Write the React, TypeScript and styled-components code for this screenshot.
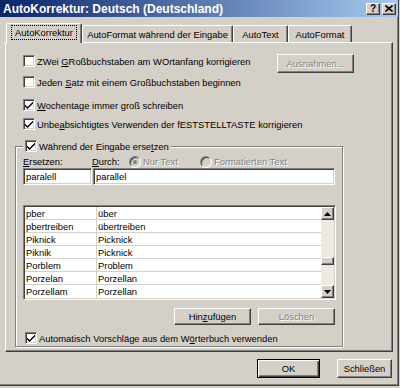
import React from "react";
import styled, { createGlobalStyle, css } from "styled-components";

const GlobalStyle = createGlobalStyle`
  html, body {
    margin: 0;
    padding: 0;
    background: #d4d0c8;
  }
  body {
    font-family: "Liberation Sans", Arial, sans-serif;
    font-size: 9.4px;
    color: #000;
  }
`;

const raised = css`
  border: 1px solid;
  border-color: #ffffff #404040 #404040 #ffffff;
  box-shadow: inset -1px -1px #808080;
`;

const sunken = css`
  border: 1px solid;
  border-color: #808080 #ffffff #ffffff #808080;
  box-shadow: inset 1px 1px #404040, inset -1px -1px #d4d0c8;
`;

const disabledText = css`
  color: #808080;
  text-shadow: 1px 1px #ffffff;
`;

function App() {
  const entries = [
    ["pber", "über"],
    ["pbertreiben", "übertreiben"],
    ["Piknick", "Picknick"],
    ["Piknik", "Picknick"],
    ["Porblem", "Problem"],
    ["Porzelan", "Porzellan"],
    ["Porzellam", "Porzellan"],
  ];

  return (
    <>
      <GlobalStyle />
      <Window>
        <TitleBar>
          <Title>AutoKorrektur: Deutsch (Deutschland)</Title>
          <CaptionButton>?</CaptionButton>
          <CaptionButton>
            <svg width="8" height="7" viewBox="0 0 8 7">
              <path d="M0.5 0.5 L7.5 6.5 M7.5 0.5 L0.5 6.5" stroke="#000" strokeWidth="1.6" />
            </svg>
          </CaptionButton>
        </TitleBar>

        <TabRow>
          <Tab $active $w={76}>
            <FocusLabel>AutoKorrektur</FocusLabel>
          </Tab>
          <Tab $w={151}>AutoFormat während der Eingabe</Tab>
          <Tab $w={55}>AutoText</Tab>
          <Tab $w={64}>AutoFormat</Tab>
        </TabRow>

        <Panel>
          <CheckRow $mt={12}>
            <Check />
            <span>
              ZWei <u>G</u>Roßbuchstaben am WOrtanfang korrigieren
            </span>
            <PushButton $w={77} $h={19} $disabled $side>
              Ausnahmen...
            </PushButton>
          </CheckRow>
          <CheckRow $mt={9}>
            <Check />
            <span>
              Jeden <u>S</u>atz mit einem Großbuchstaben beginnen
            </span>
          </CheckRow>
          <CheckRow $mt={11}>
            <Check $checked />
            <span>
              <u>W</u>ochentage immer groß schreiben
            </span>
          </CheckRow>
          <CheckRow $mt={7}>
            <Check $checked />
            <span>
              Unbe<u>a</u>bsichtigtes Verwenden der fESTSTELLTASTE korrigieren
            </span>
          </CheckRow>

          <Group>
            <Legend>
              <Check $checked />
              <span>
                Während der Eingabe erse<u>t</u>zen
              </span>
            </Legend>

            <LabelRow>
              <FieldLabel $w={69}>
                <u>E</u>rsetzen:
              </FieldLabel>
              <FieldLabel $w={37}>
                <u>D</u>urch:
              </FieldLabel>
              <RadioItem $w={71}>
                <Radio $on />
                <span>Nur Text</span>
              </RadioItem>
              <RadioItem>
                <Radio />
                <span>Formatierten Text</span>
              </RadioItem>
            </LabelRow>

            <InputRow>
              <TextBox $w={69}>paralell</TextBox>
              <TextBox $w={242}>parallel</TextBox>
            </InputRow>

            <ListBox>
              <Rows>
                {entries.map(([from, to], i) => (
                  <ListRow key={i} $last={i === entries.length - 1}>
                    <Cell $first>{from}</Cell>
                    <Cell>{to}</Cell>
                  </ListRow>
                ))}
              </Rows>
              <ScrollBar>
                <ScrollButton>
                  <svg width="7" height="4" viewBox="0 0 7 4">
                    <polygon points="3.5,0 7,4 0,4" fill="#000" />
                  </svg>
                </ScrollButton>
                <Track $offset={37}>
                  <Thumb />
                </Track>
                <ScrollButton>
                  <svg width="7" height="4" viewBox="0 0 7 4">
                    <polygon points="0,0 7,0 3.5,4" fill="#000" />
                  </svg>
                </ScrollButton>
              </ScrollBar>
            </ListBox>

            <ButtonRow>
              <PushButton $w={77} $h={17}>
                Hin<u>z</u>ufügen
              </PushButton>
              <PushButton $w={77} $h={17} $disabled>
                Löschen
              </PushButton>
            </ButtonRow>

            <AutoRow>
              <Check $checked />
              <span>
                Automatisch Vorschläge aus dem W<u>ö</u>rterbuch verwenden
              </span>
            </AutoRow>
          </Group>
        </Panel>

        <Footer>
          <PushButton $w={63} $h={19} $default>
            OK
          </PushButton>
          <PushButton $w={55} $h={19}>
            Schließen
          </PushButton>
        </Footer>
      </Window>
    </>
  );
}

function Check({ $checked }: { $checked?: boolean }) {
  return (
    <CheckBox>
      {$checked && (
        <svg width="8" height="7" viewBox="0 0 8 7">
          <path d="M0 2.5 L0 4.5 L2.5 7 L8 1.5 L8 -0.5 L2.5 5 Z" fill="#000" />
        </svg>
      )}
    </CheckBox>
  );
}

export default App;

const Window = styled.div`
  width: 399px;
  height: 386px;
  box-sizing: border-box;
  background: #d4d0c8;
  border-right: 1px solid #404040;
  border-bottom: 1px solid #404040;
  box-shadow: inset -1px -1px #808080;
  display: flex;
  flex-direction: column;
`;

const TitleBar = styled.div`
  height: 17px;
  display: flex;
  align-items: center;
  gap: 2px;
  padding: 0 2px 0 3px;
  background: linear-gradient(to right, #0a246a, #a6caf0);
`;

const Title = styled.div`
  flex: 1;
  color: #ffffff;
  font-weight: bold;
  font-size: 12px;
  white-space: nowrap;
`;

const CaptionButton = styled.div`
  width: 14px;
  height: 12px;
  box-sizing: border-box;
  background: #d4d0c8;
  ${raised}
  display: flex;
  align-items: center;
  justify-content: center;
  font-weight: bold;
  font-size: 10px;
  line-height: 1;
`;

const TabRow = styled.div`
  display: flex;
  align-items: flex-start;
  height: 19px;
  margin: 6px 0 0 6px;
  position: relative;
  z-index: 1;
`;

const Tab = styled.div<{ $active?: boolean; $w: number }>`
  width: ${(p) => p.$w}px;
  height: ${(p) => (p.$active ? 20 : 17)}px;
  margin-top: ${(p) => (p.$active ? 0 : 2)}px;
  box-sizing: border-box;
  border: 1px solid;
  border-bottom: none;
  border-color: #ffffff #404040 transparent #ffffff;
  border-radius: 2px 2px 0 0;
  box-shadow: inset -1px 0 #808080;
  background: #d4d0c8;
  display: flex;
  align-items: center;
  justify-content: center;
  padding-bottom: ${(p) => (p.$active ? 2 : 0)}px;
  white-space: nowrap;
`;

const FocusLabel = styled.span`
  outline: 1px dotted #000;
  padding: 1px 3px;
`;

const Panel = styled.div`
  margin-left: 5px;
  width: 388px;
  height: 310px;
  box-sizing: border-box;
  border: 1px solid;
  border-color: #ffffff #404040 #404040 #ffffff;
  box-shadow: inset -1px -1px #808080;
  padding-left: 9px;
  display: flex;
  flex-direction: column;
`;

const CheckRow = styled.div<{ $mt: number }>`
  display: flex;
  align-items: center;
  gap: 2px;
  height: 12px;
  margin-top: ${(p) => p.$mt}px;
  padding-left: 8px;
  white-space: nowrap;
`;

const CheckBox = styled.span`
  width: 12px;
  height: 12px;
  flex-shrink: 0;
  box-sizing: border-box;
  background: #ffffff;
  ${sunken}
  display: flex;
  align-items: center;
  justify-content: center;
`;

const PushButton = styled.div<{
  $w: number;
  $h: number;
  $disabled?: boolean;
  $default?: boolean;
  $side?: boolean;
}>`
  width: ${(p) => p.$w}px;
  height: ${(p) => p.$h}px;
  box-sizing: border-box;
  background: #d4d0c8;
  display: flex;
  align-items: center;
  justify-content: center;
  white-space: nowrap;
  ${(p) =>
    p.$default
      ? css`
          border: 1px solid #000;
          box-shadow: inset 1px 1px #ffffff, inset -1px -1px #404040, inset -2px -2px #808080;
        `
      : raised}
  ${(p) => p.$disabled && disabledText}
  ${(p) =>
    p.$side &&
    css`
      align-self: flex-start;
      margin: -1px 38px 0 auto;
    `}
`;

const Group = styled.div`
  margin-top: 16px;
  width: 328px;
  height: 201px;
  box-sizing: border-box;
  border: 1px solid #808080;
  box-shadow: inset 1px 1px #ffffff, 1px 1px #ffffff;
  padding: 0 7px;
  display: flex;
  flex-direction: column;
`;

const Legend = styled.div`
  align-self: flex-start;
  display: flex;
  align-items: center;
  gap: 2px;
  height: 12px;
  margin-top: -7px;
  padding: 0 2px;
  background: #d4d0c8;
  white-space: nowrap;
`;

const LabelRow = styled.div`
  display: flex;
  align-items: center;
  height: 11px;
  margin-top: 4px;
  white-space: nowrap;
`;

const FieldLabel = styled.div<{ $w: number }>`
  width: ${(p) => p.$w}px;
`;

const RadioItem = styled.div<{ $w?: number }>`
  width: ${(p) => (p.$w ? `${p.$w}px` : "auto")};
  display: flex;
  align-items: center;
  gap: 2px;
  ${disabledText}
`;

const Radio = styled.span<{ $on?: boolean }>`
  width: 12px;
  height: 12px;
  box-sizing: border-box;
  border-radius: 50%;
  border: 1px solid;
  border-color: #808080 #ffffff #ffffff #808080;
  box-shadow: inset 1px 1px #404040;
  background: #d4d0c8;
  display: flex;
  align-items: center;
  justify-content: center;
  text-shadow: none;
  &::after {
    content: "";
    width: 4px;
    height: 4px;
    border-radius: 50%;
    background: ${(p) => (p.$on ? "#808080" : "transparent")};
  }
`;

const InputRow = styled.div`
  display: flex;
  gap: 1px;
  margin-top: 1px;
`;

const TextBox = styled.div<{ $w: number }>`
  width: ${(p) => p.$w}px;
  height: 17px;
  box-sizing: border-box;
  background: #ffffff;
  ${sunken}
  padding-left: 2px;
  display: flex;
  align-items: center;
`;

const ListBox = styled.div`
  width: 313px;
  height: 95px;
  margin-top: 20px;
  box-sizing: border-box;
  background: #ffffff;
  ${sunken}
  padding: 1px;
  display: flex;
`;

const Rows = styled.div`
  flex: 1;
  display: flex;
  flex-direction: column;
`;

const ListRow = styled.div<{ $last?: boolean }>`
  height: 13px;
  box-sizing: border-box;
  display: grid;
  grid-template-columns: 72px 1fr;
  border-bottom: ${(p) => (p.$last ? "none" : "1px solid #d4d0c8")};
`;

const Cell = styled.div<{ $first?: boolean }>`
  padding-left: 1px;
  display: flex;
  align-items: center;
  white-space: nowrap;
  border-right: ${(p) => (p.$first ? "1px solid #d4d0c8" : "none")};
`;

const ScrollBar = styled.div`
  width: 13px;
  display: flex;
  flex-direction: column;
  background: #ece9e3;
`;

const ScrollButton = styled.div`
  height: 13px;
  box-sizing: border-box;
  background: #d4d0c8;
  ${raised}
  display: flex;
  align-items: center;
  justify-content: center;
`;

const Track = styled.div<{ $offset: number }>`
  flex: 1;
  padding-top: ${(p) => p.$offset}px;
`;

const Thumb = styled.div`
  height: 8px;
  box-sizing: border-box;
  background: #d4d0c8;
  ${raised}
`;

const ButtonRow = styled.div`
  display: flex;
  justify-content: flex-end;
  gap: 7px;
  margin-top: 8px;
`;

const AutoRow = styled.div`
  display: flex;
  align-items: center;
  gap: 2px;
  height: 12px;
  margin-top: 7px;
  padding-left: 2px;
  white-space: nowrap;
`;

const Footer = styled.div`
  display: flex;
  justify-content: flex-end;
  gap: 17px;
  margin-top: 7px;
  padding-right: 6px;
`;
